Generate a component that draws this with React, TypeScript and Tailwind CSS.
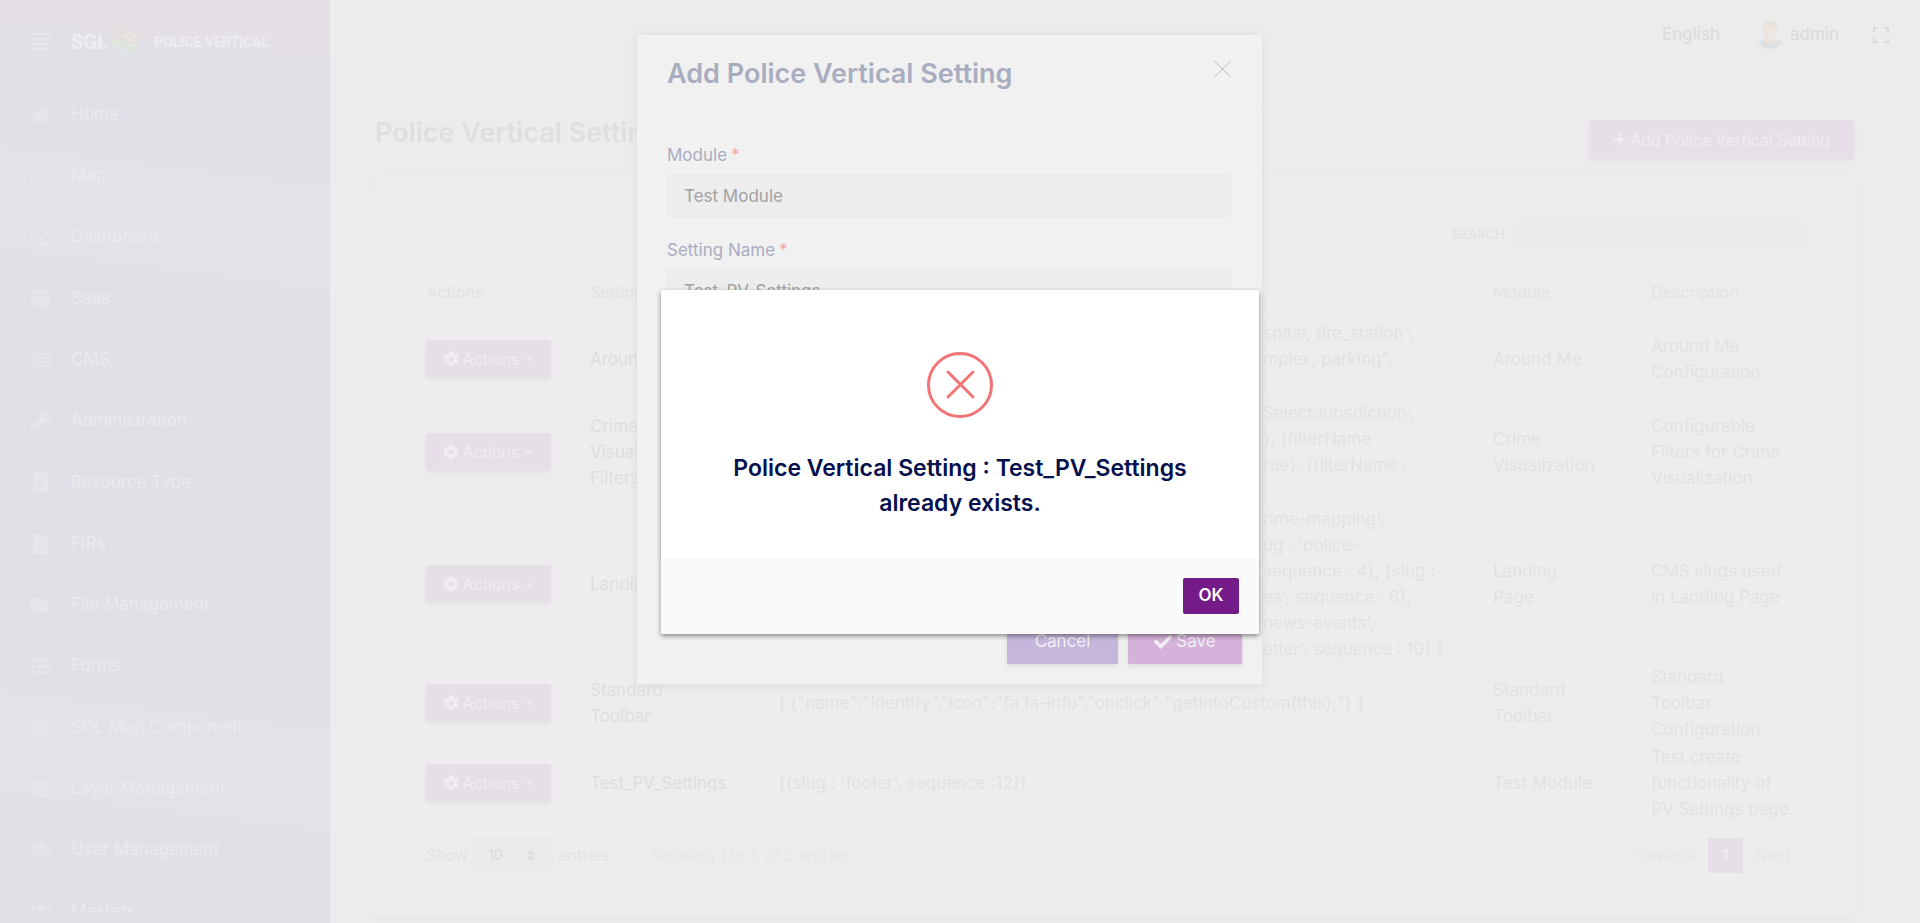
import React from 'react';
import {
  FaCaretDown,
  FaChartLine,
  FaCheck,
  FaChevronDown,
  FaCog,
  FaFileAlt,
  FaFolderOpen,
  FaGlobe,
  FaHome,
  FaLayerGroup,
  FaList,
  FaPlus,
  FaRegMap,
  FaRegNewspaper,
  FaSort,
  FaUsers,
  FaUsersCog,
  FaWrench,
} from 'react-icons/fa';
import type { IconType } from 'react-icons';

type NavItem = { label: string; icon: IconType; expandable?: boolean };

const navItems: NavItem[] = [
  { label: 'Home', icon: FaHome },
  { label: 'Map', icon: FaRegMap },
  { label: 'Dashboard', icon: FaChartLine },
  { label: 'Saas', icon: FaGlobe, expandable: true },
  { label: 'CMS', icon: FaRegNewspaper, expandable: true },
  { label: 'Administration', icon: FaWrench, expandable: true },
  { label: 'Resource Type', icon: FaFileAlt },
  { label: 'FIRs', icon: FaFileAlt },
  { label: 'File Management', icon: FaFolderOpen },
  { label: 'Forms', icon: FaList },
  { label: 'SGL Map Component', icon: FaGlobe },
  { label: 'Layer Management', icon: FaLayerGroup, expandable: true },
  { label: 'User Management', icon: FaUsersCog, expandable: true },
  { label: 'Masters', icon: FaUsers, expandable: true },
];

type Row = {
  name: string[];
  value: string[];
  valueIndented?: boolean;
  module: string[];
  description: string[];
  height: string;
};

const rows: Row[] = [
  {
    name: ['Around Me'],
    value: ['spital, fire_station",', 'mplex, parking",', ''],
    valueIndented: true,
    module: ['Around Me'],
    description: ['Around Me', 'Configuration'],
    height: 'h-20',
  },
  {
    name: ['Crime', 'Visualization', 'Filters'],
    value: ["SelectJurisdiction',", '}, {filterName :', 'rue}, {filterName :', ''],
    valueIndented: true,
    module: ['Crime', 'Visualization'],
    description: ['Configurable', 'Filters for Crime', 'Visualization'],
    height: 'h-[106px]',
  },
  {
    name: ['Landing Page'],
    value: [
      "rime-mapping',",
      "ug : 'police-",
      'sequence : 4}, {slug :',
      "es', sequence : 6},",
      "news-events',",
      "etter', sequence : 10} ]",
    ],
    valueIndented: true,
    module: ['Landing', 'Page'],
    description: ['CMS slugs used', 'in Landing Page'],
    height: 'h-[158px]',
  },
  {
    name: ['Standard', 'Toolbar'],
    value: ['[ {"name":"Identify","icon":"fa fa-info","onclick":"getInfoCustom(this);"} ]'],
    module: ['Standard', 'Toolbar'],
    description: ['Standard', 'Toolbar', 'Configuration'],
    height: 'h-20',
  },
  {
    name: ['Test_PV_Settings'],
    value: ["[{slug : 'footer', sequence :12}]"],
    module: ['Test Module'],
    description: ['Test create', 'functionality of', 'PV Settings page.'],
    height: 'h-20',
  },
];

function Lines({ lines, className = '' }: { lines: string[]; className?: string }) {
  return (
    <>
      {lines.map((line, i) => (
        <span key={i} className={`block h-[26px] whitespace-nowrap ${className}`}>
          {line}
        </span>
      ))}
    </>
  );
}

function SortArrows() {
  return (
    <svg width="14" height="16" viewBox="0 0 14 16" fill="none" stroke="#e9e9e9" aria-hidden="true">
      <path d="M3 15V2M1 4l2-2 2 2M11 1v13M9 12l2 2 2-2" />
    </svg>
  );
}

function GlobeLogo() {
  return (
    <svg width="30" height="28" viewBox="0 0 30 28" aria-hidden="true">
      <defs>
        <linearGradient id="globe" x1="0.6" y1="0" x2="0.35" y2="1">
          <stop offset="0" stopColor="#eae2dd" />
          <stop offset="0.4" stopColor="#eae6dc" />
          <stop offset="0.65" stopColor="#dfe6df" />
          <stop offset="1" stopColor="#dce4eb" />
        </linearGradient>
      </defs>
      <circle cx="14" cy="14" r="13" fill="url(#globe)" />
      <g fill="none" stroke="#dddcdf" strokeWidth="1.4">
        <path d="M4 6c6 6 13 10 25 9" />
        <path d="M8 3c7 2 14 5 18 11" />
        <path d="M3 12C7 5 14 2 21 3" />
        <path d="M16 1c-4 3-6 8-5 15" />
      </g>
    </svg>
  );
}

function Sidebar() {
  return (
    <aside className="relative w-[330px] shrink-0 overflow-hidden bg-[#e2e0e7] text-[#ebebec]">
      <svg
        className="absolute inset-0 h-full w-full"
        viewBox="0 0 330 923"
        preserveAspectRatio="none"
        aria-hidden="true"
      >
        <rect width="330" height="923" fill="#e2e0e7" />
        <path d="M0 0H330V60L0 21Z" fill="#e5dfe6" />
        <path d="M0 145L330 185V292L0 250Z" fill="#e4e1e8" />
        <path d="M0 250L330 292V923H0Z" fill="#e1e0e6" />
        <path d="M0 689L330 729V833L0 792Z" fill="#e3e2e8" />
        <path d="M0 792L330 833V923H0Z" fill="#e0e1e6" />
      </svg>
      <div className="relative flex h-[84px] items-center pl-8">
        <button type="button" aria-label="Toggle menu" className="mr-5">
          <svg width="19" height="18" viewBox="0 0 19 18" stroke="#e8e7ea" strokeWidth="2">
            <path d="M0 1h19M0 6h19M0 11h19M0 16h19" />
          </svg>
        </button>
        <a href="#home" className="flex items-center" aria-label="SGL Police Vertical">
          <span className="w-10 font-['Roboto',sans-serif] text-xl leading-7 font-bold text-[#eeeef0]">
            SGL
          </span>
          <GlobeLogo />
          <span className="mr-1 ml-2 h-7 border-l border-[#e8e6e6]" />
          <span className="font-['Roboto',sans-serif] text-sm font-bold whitespace-nowrap text-[#ededef]">
            POLICE VERTICAL
          </span>
        </a>
      </div>
      <nav className="relative h-[828px] overflow-hidden">
        <ul className="flex h-[858px] flex-col">
          {navItems.map(({ label, icon: Icon, expandable }) => (
            <li key={label} className="flex flex-1">
              <a href="#nav" className="flex flex-1 items-center pr-[35px] pl-[31px]">
                <span className="w-10 text-[#e7e6eb]">
                  <Icon className="h-5 w-auto" />
                </span>
                <span className="flex-1 text-[17px]">{label}</span>
                {expandable && <FaChevronDown size={11} className="text-[#e5e5e9]" />}
              </a>
            </li>
          ))}
        </ul>
      </nav>
    </aside>
  );
}

function TopBar() {
  return (
    <header className="flex h-[71px] items-center justify-end border-b border-[#ebebeb] pr-[31px] text-[17px] text-[#dadada]">
      <button type="button" className="mr-[38px]">English</button>
      <button type="button" className="mr-[34px] flex items-center gap-2">
        <svg width="24" height="30" viewBox="0 0 24 30" aria-hidden="true">
          <path d="M0 21c3-1 6-1 8-3h8c2 2 5 2 8 3-2 5-7 8-12 8S2 26 0 21Z" fill="#dfe0e2" />
          <path d="M8 17h8v5c-2 3-6 3-8 0Z" fill="#ebe3dc" />
          <ellipse cx="12" cy="12" rx="6" ry="8" fill="#ece5e0" />
          <path d="M5 11C3 4 8 0 12 1c5-1 8 4 7 10l-2-4c-4 0-7-1-9-2-2 2-2 4-3 6Z" fill="#e6e2db" />
        </svg>
        admin
      </button>
      <button type="button" aria-label="Full screen">
        <svg width="16" height="16" viewBox="0 0 16 16" fill="none" stroke="#dadada" strokeWidth="2">
          <path d="M1 5V1h4M11 1h4v4M15 11v4h-4M5 15H1v-4" />
        </svg>
      </button>
    </header>
  );
}

function SettingsTable() {
  return (
    <table className="w-full table-fixed text-left text-[17px] leading-[26px] text-[#e2e2e2]">
      <colgroup>
        <col className="w-[164px]" />
        <col className="w-[189px]" />
        <col />
        <col className="w-[158px]" />
        <col className="w-[172px]" />
      </colgroup>
      <thead className="text-base text-[#e4e4e4]">
        <tr className="h-[54px]">
          <th className="font-medium">Actions</th>
          <th className="font-medium">Setting Name</th>
          <th className="font-medium">
            <span className="flex justify-end pr-[27px]"><SortArrows /></span>
          </th>
          <th className="font-medium">
            <span className="flex items-center justify-between pr-[27px]">Module<SortArrows /></span>
          </th>
          <th className="font-medium">
            <span className="flex items-center justify-between pr-2">Description<SortArrows /></span>
          </th>
        </tr>
      </thead>
      <tbody>
        {rows.map((row) => (
          <tr key={row.name[0]} className={`border-t border-[#ebebeb] ${row.height}`}>
            <td className="p-0">
              <button
                type="button"
                className="flex h-[38px] w-[125px] items-center justify-center gap-1 rounded-xs bg-[#e6dfe8] text-base text-[#efedef] shadow-[0_2px_5px_#e6e6e6]"
              >
                <FaCog size={16} />
                Actions
                <FaCaretDown size={11} />
              </button>
            </td>
            <td className="p-0 text-[#dedede]"><Lines lines={row.name} /></td>
            <td className="p-0"><Lines lines={row.value} className={row.valueIndented ? 'pl-[484px]' : ''} /></td>
            <td className="p-0"><Lines lines={row.module} /></td>
            <td className="p-0"><Lines lines={row.description} /></td>
          </tr>
        ))}
      </tbody>
    </table>
  );
}

function SettingsPage() {
  return (
    <main className="min-w-0 flex-1">
      <TopBar />
      <div className="pr-[66px] pl-[45px]">
        <div className="flex h-[103px] items-center justify-between pt-[22px]">
          <h1 className="text-[27px] font-semibold text-[#dfdfdf]">Police Vertical Settings</h1>
          <button
            type="button"
            className="mt-3 flex h-[39px] w-[265px] items-center justify-center gap-1 rounded-xs bg-[#e6dfe8] text-base text-[#efedef] shadow-[0_2px_5px_#e6e6e6]"
          >
            <FaPlus size={13} />
            Add Police Vertical Setting
          </button>
        </div>
        <section className="h-[743px] rounded-sm border border-[#ebebeb] bg-[#ededed] pt-11 pr-[30px] pl-[50px] shadow-[0_4px_8px_#e9e9e9]">
          <div className="flex items-center justify-end gap-2 pr-4">
            <label htmlFor="search" className="text-[13px] font-semibold text-[#e3e3e3]">SEARCH</label>
            <input id="search" type="text" className="h-8 w-[294px] rounded-md bg-[#ebebeb] px-3 outline-none" />
          </div>
          <div className="pt-[14px]"><SettingsTable /></div>
          <div className="mt-[14px] flex h-9 items-center text-base text-[#e3e3e3]">
            <label htmlFor="entries">Show</label>
            <span className="relative mx-1 flex items-center">
              <select
                id="entries"
                defaultValue="10"
                className="h-[34px] w-[82px] appearance-none rounded-sm bg-[#ebebeb] pl-4 text-sm text-[#dadada] outline-none"
              >
                <option>10</option>
                <option>25</option>
              </select>
              <FaSort size={15} className="pointer-events-none absolute right-4 text-[#dedede]" />
            </span>
            <span>entries</span>
            <span className="ml-10 text-[#e7e7e7]">Showing 1 to 5 of 5 entries</span>
            <nav className="mr-[33px] ml-auto flex items-center gap-3 text-[#e7e7e7]" aria-label="Pages">
              <a href="#previous">Previous</a>
              <a
                href="#page-1"
                className="flex h-[35px] w-[35px] items-center justify-center rounded-xs bg-[#e6dfe8] font-medium text-[#f0eef0]"
              >
                1
              </a>
              <a href="#next">Next</a>
            </nav>
          </div>
        </section>
      </div>
    </main>
  );
}

function Field({ id, label, value }: { id: string; label: string; value: string }) {
  return (
    <div className="flex flex-col">
      <label htmlFor={id} className="flex h-[38px] items-center gap-1 pt-[2px] text-[17px] text-[#a9adc2]">
        {label} <span className="text-[#f5a5a5]">*</span>
      </label>
      <input
        id={id}
        type="text"
        defaultValue={value}
        className="h-[43px] rounded-sm border border-[#eaeaea] bg-[#ededed] px-4 text-[17px] text-[#a2a2a2] outline-none"
      />
    </div>
  );
}

function AddSettingDialog() {
  return (
    <div className="absolute inset-0 flex items-start justify-center pt-[35px] pr-[21px]">
      <form
        className="flex h-[649px] w-[625px] flex-col rounded-xs bg-[#f1f1f1] shadow-[0_1px_8px_#d9d9d9]"
        onSubmit={(e) => e.preventDefault()}
      >
        <div className="flex h-[76px] items-start justify-between border-b border-[#eeeeee] pr-[31px] pl-[30px]">
          <h2 className="pt-5 text-[27px] leading-[38px] font-semibold text-[#a9adc0]">
            Add Police Vertical Setting
          </h2>
          <button type="button" aria-label="Close" className="mt-[26px]">
            <svg width="17" height="16" viewBox="0 0 17 16" stroke="#bcbcbc" strokeWidth="1">
              <path d="M.5 0l16 16M16.500 0l-16 16" />
            </svg>
          </button>
        </div>
        <div className="flex flex-1 flex-col gap-[14px] px-[30px] pt-[25px]">
          <Field id="module" label="Module" value="Test Module" />
          <Field id="setting-name" label="Setting Name" value="Test_PV_Settings" />
        </div>
        <div className="flex justify-end gap-[10px] pr-5 pb-5 text-[17px] text-[#f2f0f4]">
          <button type="button" className="h-11 w-[111px] rounded-xs bg-[#c5b6dc] shadow-[0_2px_5px_#dcdcdc]">
            Cancel
          </button>
          <button
            type="submit"
            className="flex h-11 w-[114px] items-center justify-center gap-1 rounded-xs bg-[#d5b2da] shadow-[0_2px_5px_#dcdcdc]"
          >
            <FaCheck size={18} />
            Save
          </button>
        </div>
      </form>
    </div>
  );
}

function ErrorAlert() {
  return (
    <div className="absolute inset-0 flex items-center justify-center">
      <div
        role="alertdialog"
        aria-labelledby="alert-title"
        className="w-[598px] overflow-hidden rounded-xs bg-white shadow-[0_2px_5px_#00000070]"
      >
        <div className="flex h-[268px] flex-col items-center pt-[62px]">
          <svg width="66" height="66" viewBox="0 0 66 66" fill="none" stroke="#f27474" strokeWidth="3" aria-hidden="true">
            <circle cx="33" cy="33" r="31.500" />
            <path d="M21 20l25 25M46 20L21 45" strokeLinecap="round" />
          </svg>
          <h2
            id="alert-title"
            className="pt-[33px] text-center text-[23px] leading-[35px] font-semibold text-[#05104d]"
          >
            Police Vertical Setting : Test_PV_Settings
            <br />
            already exists.
          </h2>
        </div>
        <div className="flex h-[76px] items-center justify-end bg-[#fafafa] pr-5">
          <button type="button" className="h-9 w-14 rounded-xs bg-[#741b87] text-[17px] font-semibold text-white">
            OK
          </button>
        </div>
      </div>
    </div>
  );
}

export default function App() {
  return (
    <div className="relative flex h-screen overflow-hidden bg-[#ececec] font-['Inter','Liberation_Sans',sans-serif]">
      <Sidebar />
      <SettingsPage />
      <AddSettingDialog />
      <ErrorAlert />
    </div>
  );
}
